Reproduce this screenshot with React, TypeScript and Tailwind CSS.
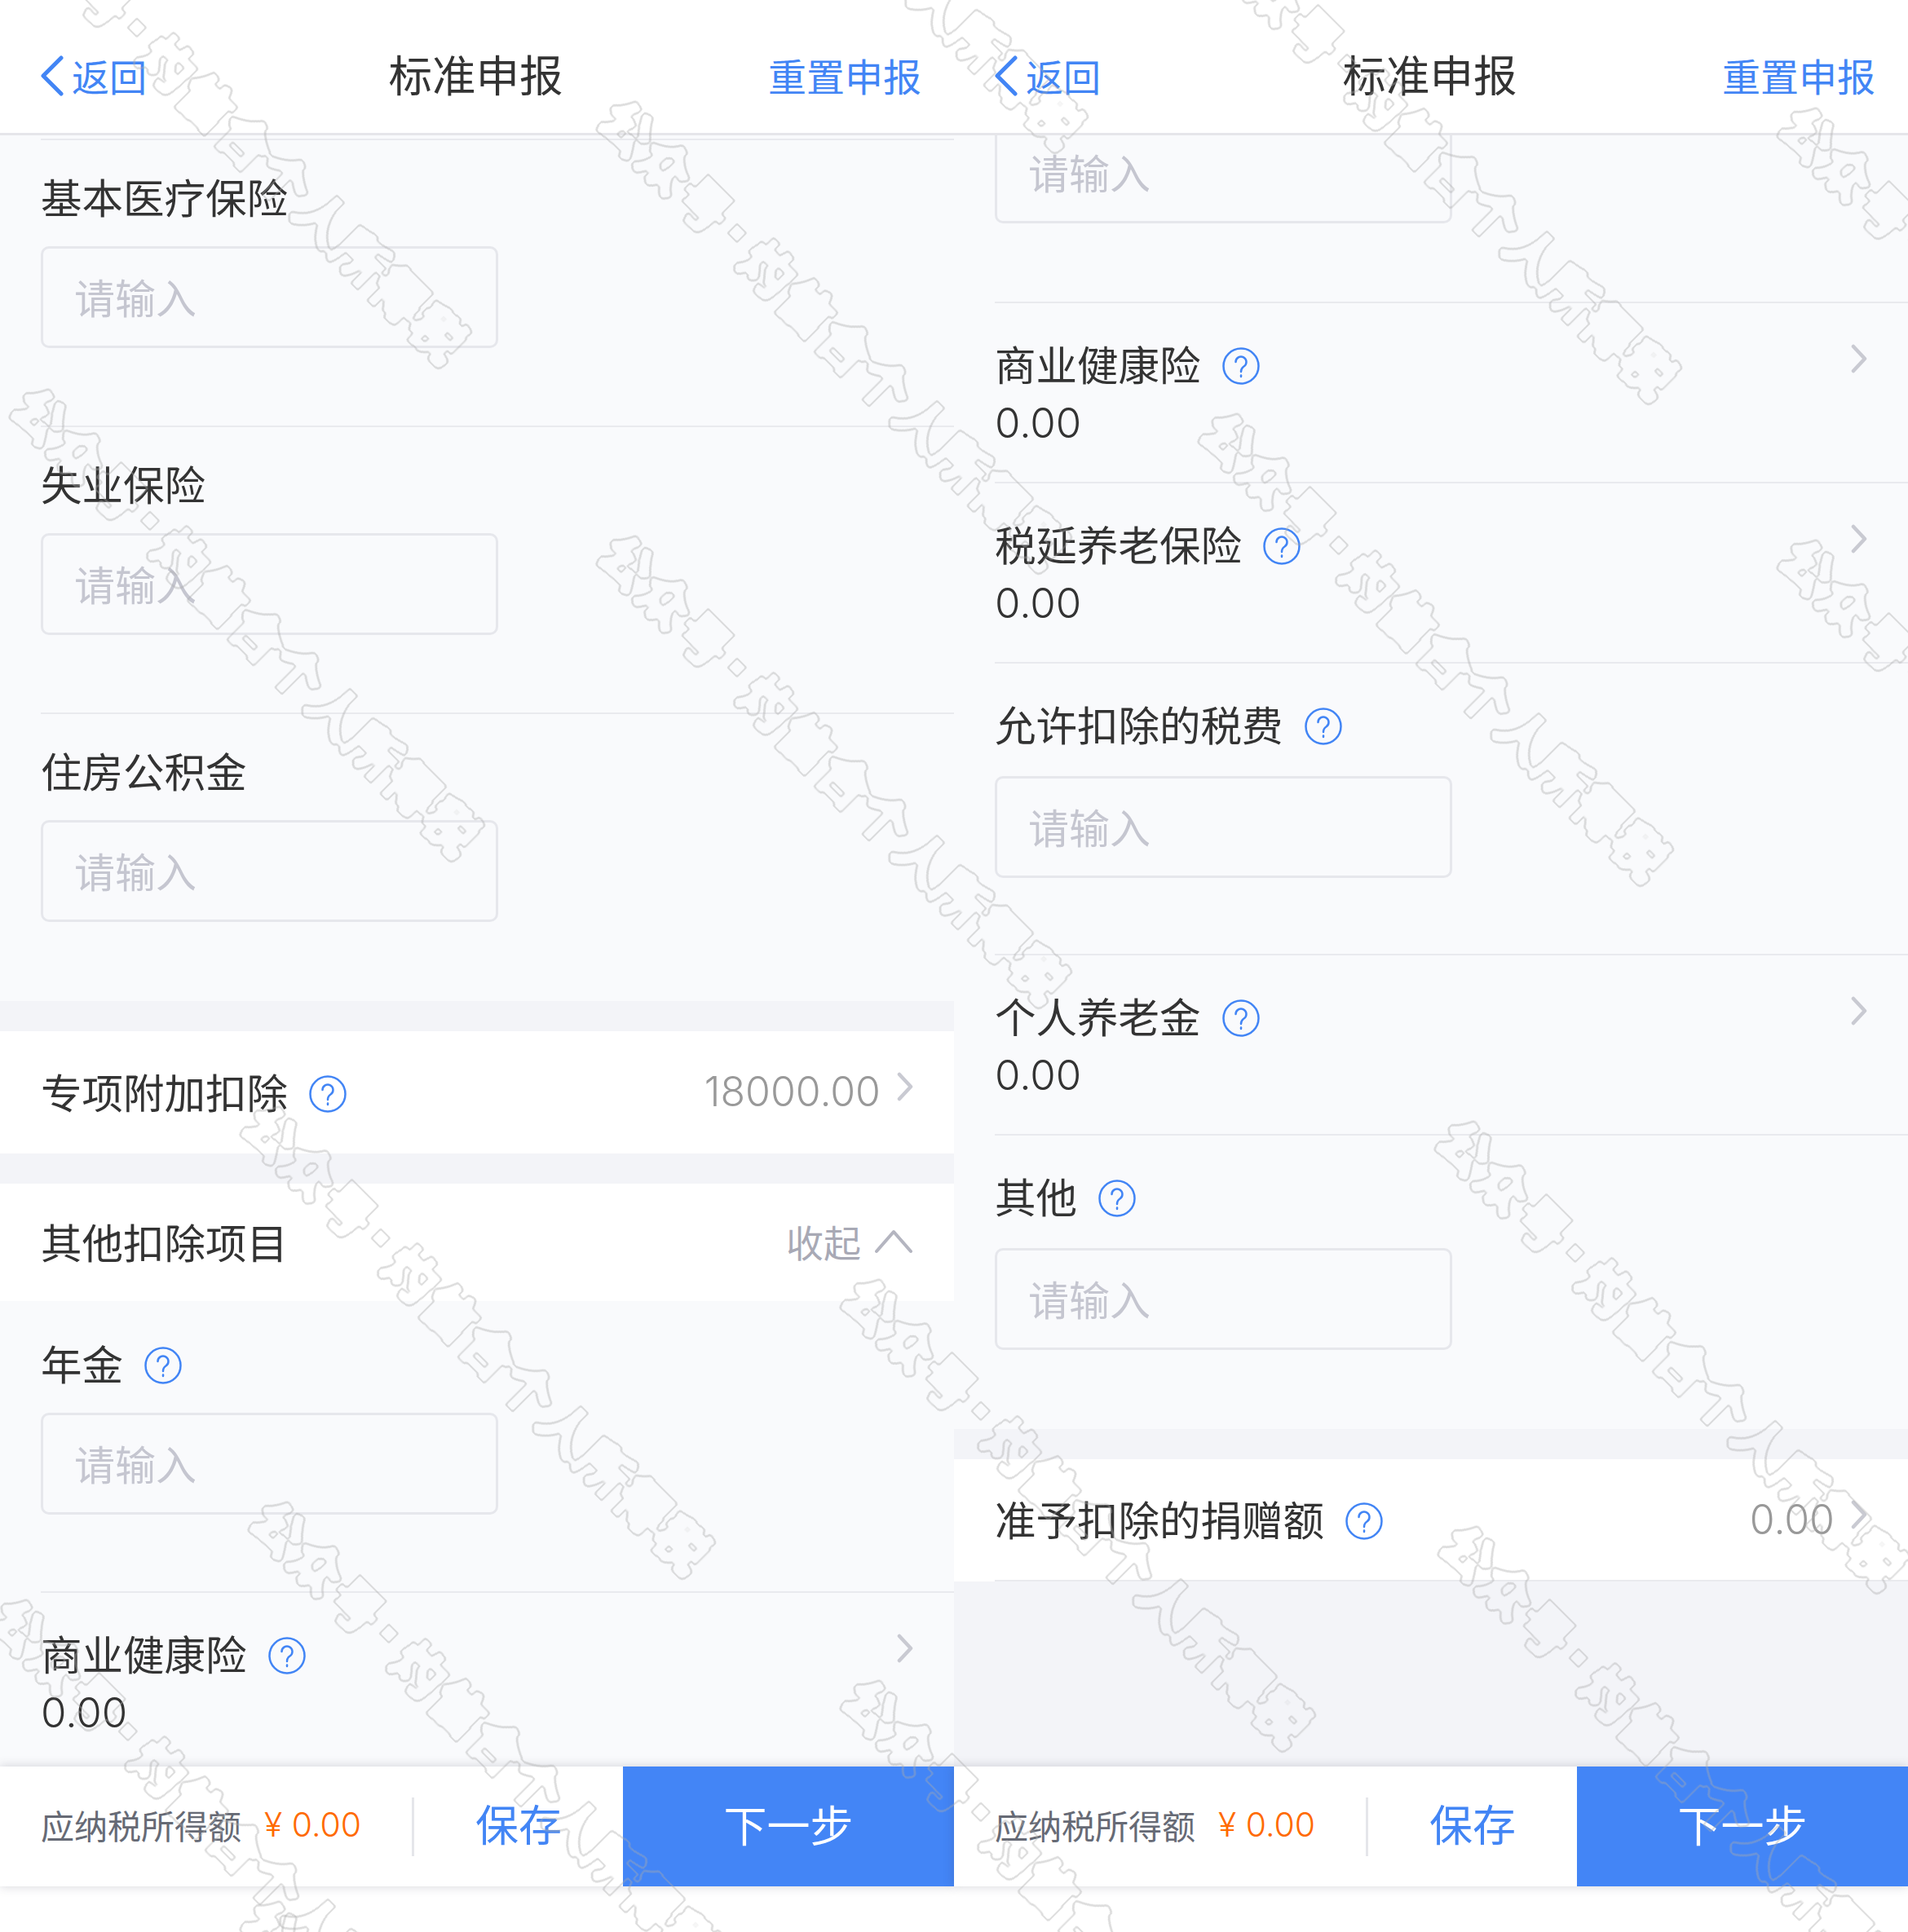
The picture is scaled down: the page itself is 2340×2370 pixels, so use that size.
const marks = [
  [31, -95], [767, 157], [787, -359], [1515, -51], [2215, 165], [2215, 695], [767, 690], [47, 510],
  [1505, 540], [1795, 1408], [1799, 1905], [330, 1390], [340, 1875], [1066, 1602], [1066, 2094],
  [20, 1995], [330, 2365],
];

const inputClass =
  "h-[125px] w-[561px] rounded-[10px] border-[3px] border-[#e6e7ec] px-[38px] pb-1 text-[50px] placeholder:text-[#c5c6d0]";
const digits = "font-['Inter','Noto_Sans_CJK_SC',sans-serif] font-[350]";

function Help() {
  return (
    <svg width="46" height="46" viewBox="0 0 46 46" fill="none" stroke="#4285f5" strokeWidth="2.5" className="mt-[6px] ml-[26px] shrink-0">
      <circle cx="23" cy="23" r="21.5" />
      <path d="M16.5 18a6.5 6.5 0 1 1 10 5.5c-2.5 1.6-3.5 3-3.5 6.500" strokeLinecap="round" />
      <path d="M23 34.500v1.500" strokeLinecap="round" />
    </svg>
  );
}

function Chevron() {
  return (
    <svg width="20" height="36" viewBox="0 0 20 36" fill="none" stroke="#c9cad2" strokeWidth="4.500" strokeLinecap="round" strokeLinejoin="round" className="shrink-0">
      <path d="M3 3l14 15L3 33" />
    </svg>
  );
}

function Label({ text, help }: { text: string; help?: boolean }) {
  return (
    <div className="flex h-[72px] items-center pb-[2px] text-[50.500px] text-[#333]">
      {text}
      {help && <Help />}
    </div>
  );
}

function Field({ label, help, tall }: { label: string; help?: boolean; tall?: boolean }) {
  return (
    <div className={tall ? "ml-[50px] border-t-2 border-[#e9eaee] pt-[39px] pb-[93px]" : "ml-[50px] border-t-2 border-[#e9eaee] pt-[34px] pb-[95px]"}>
      <Label text={label} help={help} />
      <input placeholder="请输入" className={tall ? `mt-[27px] ${inputClass}` : `mt-[24px] ${inputClass}`} />
    </div>
  );
}

function LinkRow({ label }: { label: string }) {
  return (
    <div className="ml-[50px] flex h-[221px] justify-between border-t-2 border-[#e9eaee] pt-[39px] pr-[50px]">
      <div>
        <Label text={label} help />
        <div className={`mt-[2px] h-[68px] text-[51px] leading-[68px] text-[#333] ${digits}`}>0.00</div>
      </div>
      <div className="pt-[11px]">
        <Chevron />
      </div>
    </div>
  );
}

function Header() {
  return (
    <header className="flex h-[166px] shrink-0 items-center justify-between border-b-[3px] border-[#e6e6ea] bg-white pt-[22px] pr-10 pl-[50px]">
      <div className="flex w-[227px] items-center text-[46px] text-[#4285f5]">
        <svg width="28" height="50" viewBox="0 0 28 50" fill="none" stroke="#4285f5" strokeWidth="5" strokeLinecap="round" strokeLinejoin="round" className="mr-[10px]">
          <path d="M25 3L3 25l22 22" />
        </svg>
        返回
      </div>
      <div className="pb-1 text-[53.500px] text-[#333]">标准申报</div>
      <div className="flex w-[240px] justify-end text-[47px] text-[#4285f5]">重置申报</div>
    </header>
  );
}

function BottomBar() {
  return (
    <footer className="z-[1] flex h-[147px] shrink-0 items-center bg-white shadow-[0_0_12px_rgba(60,60,80,0.22)]">
      <div className="flex w-[505px] items-center pb-1 pl-[50px]">
        <span className="text-[41px] text-[#666a75]">应纳税所得额</span>
        <span className={`ml-[28px] text-[41px] text-[#ff6a00] ${digits}`}>¥ 0.00</span>
      </div>
      <div className="h-[72px] w-[3px] bg-[#e5e6ea]" />
      <div className="flex-1 pb-[7px] text-center text-[53px] text-[#4285f5]">保存</div>
      <div className="flex h-full w-[406px] items-center justify-center bg-[#4385f6] pb-[6px] text-[53px] text-white">下一步</div>
    </footer>
  );
}

function LeftPanel() {
  return (
    <div className="flex h-full w-[1170px] flex-col">
      <Header />
      <main className="flex-1 overflow-hidden bg-[#f3f4f8]">
        <div className="bg-[#f9fafc] pt-1 pb-[2px]">
          <Field label="基本医疗保险" />
          <Field label="失业保险" />
          <Field label="住房公积金" />
        </div>
        <div className="mt-[37px] flex h-[150px] items-center justify-between bg-white px-[50px]">
          <Label text="专项附加扣除" help />
          <div className={`flex items-center pb-[2px] text-[50px] text-[#999] ${digits}`}>
            18000.00
            <div className="-mt-3 ml-5">
              <Chevron />
            </div>
          </div>
        </div>
        <div className="mt-[37px] flex h-[144px] items-center justify-between bg-white px-[50px]">
          <Label text="其他扣除项目" />
          <div className="flex items-center pb-1 text-[46px] text-[#a8a9b5]">
            收起
            <svg width="48" height="32" viewBox="0 0 48 32" fill="none" stroke="#b4b5c0" strokeWidth="4" strokeLinecap="round" strokeLinejoin="round" className="ml-4">
              <path d="M3 29L24 5l21 24" />
            </svg>
          </div>
        </div>
        <div className="bg-[#f9fafc]">
          <div className="ml-[50px] pt-[41px] pb-[94px]">
            <Label text="年金" help />
            <input placeholder="请输入" className={`mt-[24px] ${inputClass}`} />
          </div>
          <LinkRow label="商业健康险" />
        </div>
      </main>
      <BottomBar />
      <div className="h-[56px] shrink-0 bg-white" />
    </div>
  );
}

function RightPanel() {
  return (
    <div className="flex h-full w-[1170px] flex-col">
      <Header />
      <main className="flex-1 overflow-hidden bg-[#f3f4f8]">
        <div className="bg-[#f9fafc] pb-1">
          <div className="ml-[50px] pb-[96px]">
            <input placeholder="请输入" className={`-mt-[17px] block ${inputClass}`} />
          </div>
          <LinkRow label="商业健康险" />
          <LinkRow label="税延养老保险" />
          <Field label="允许扣除的税费" help tall />
          <LinkRow label="个人养老金" />
          <Field label="其他" help tall />
        </div>
        <div className="mt-[37px] bg-white">
          <div className="ml-[50px] flex h-[150px] items-center justify-between border-b-2 border-[#e9eaee] pr-[50px]">
            <Label text="准予扣除的捐赠额" help />
            <div className={`flex items-center text-[50px] text-[#999] ${digits}`}>
              0.00
              <div className="-mt-3 ml-5">
                <Chevron />
              </div>
            </div>
          </div>
        </div>
      </main>
      <BottomBar />
      <div className="h-[56px] shrink-0 bg-white" />
    </div>
  );
}

export default function App() {
  return (
    <div lang="zh-CN" className="relative flex h-[2370px] w-[2340px] overflow-hidden bg-white font-['Noto_Sans_CJK_SC','Liberation_Sans',sans-serif]">
      <svg width="0" height="0" className="absolute">
        <defs>
          <filter id="wm" x="-5%" y="-40%" width="110%" height="180%" colorInterpolationFilters="sRGB">
            <feMorphology in="SourceAlpha" operator="dilate" radius="3" result="d" />
            <feGaussianBlur in="d" stdDeviation="1.5" result="b" />
            <feComponentTransfer in="b" result="outer">
              <feFuncA type="linear" slope="8" intercept="-3" />
            </feComponentTransfer>
            <feMorphology in="outer" operator="erode" radius="2" result="inner" />
            <feComposite in="outer" in2="inner" operator="out" result="ring" />
            <feFlood floodColor="#aaaaaa" floodOpacity="0.4" />
            <feComposite in2="ring" operator="in" />
          </filter>
        </defs>
      </svg>
      <LeftPanel />
      <RightPanel />
      {/* watermark sits over both screens */}
      <div className="pointer-events-none absolute inset-0 z-10">
        {marks.map(([x, y]) => (
          <div
            key={`${x}-${y}`}
            className="absolute flex origin-left -translate-y-1/2 rotate-45 items-center text-[64px] font-bold tracking-[3px] whitespace-nowrap [filter:url(#wm)]"
            style={{ left: x - 18, top: y - 26 }}
          >
            公众号
            <span className="mr-[20px] ml-[12px] h-[12px] w-[12px] bg-black" />
            灼信合个人所得税
          </div>
        ))}
      </div>
    </div>
  );
}
